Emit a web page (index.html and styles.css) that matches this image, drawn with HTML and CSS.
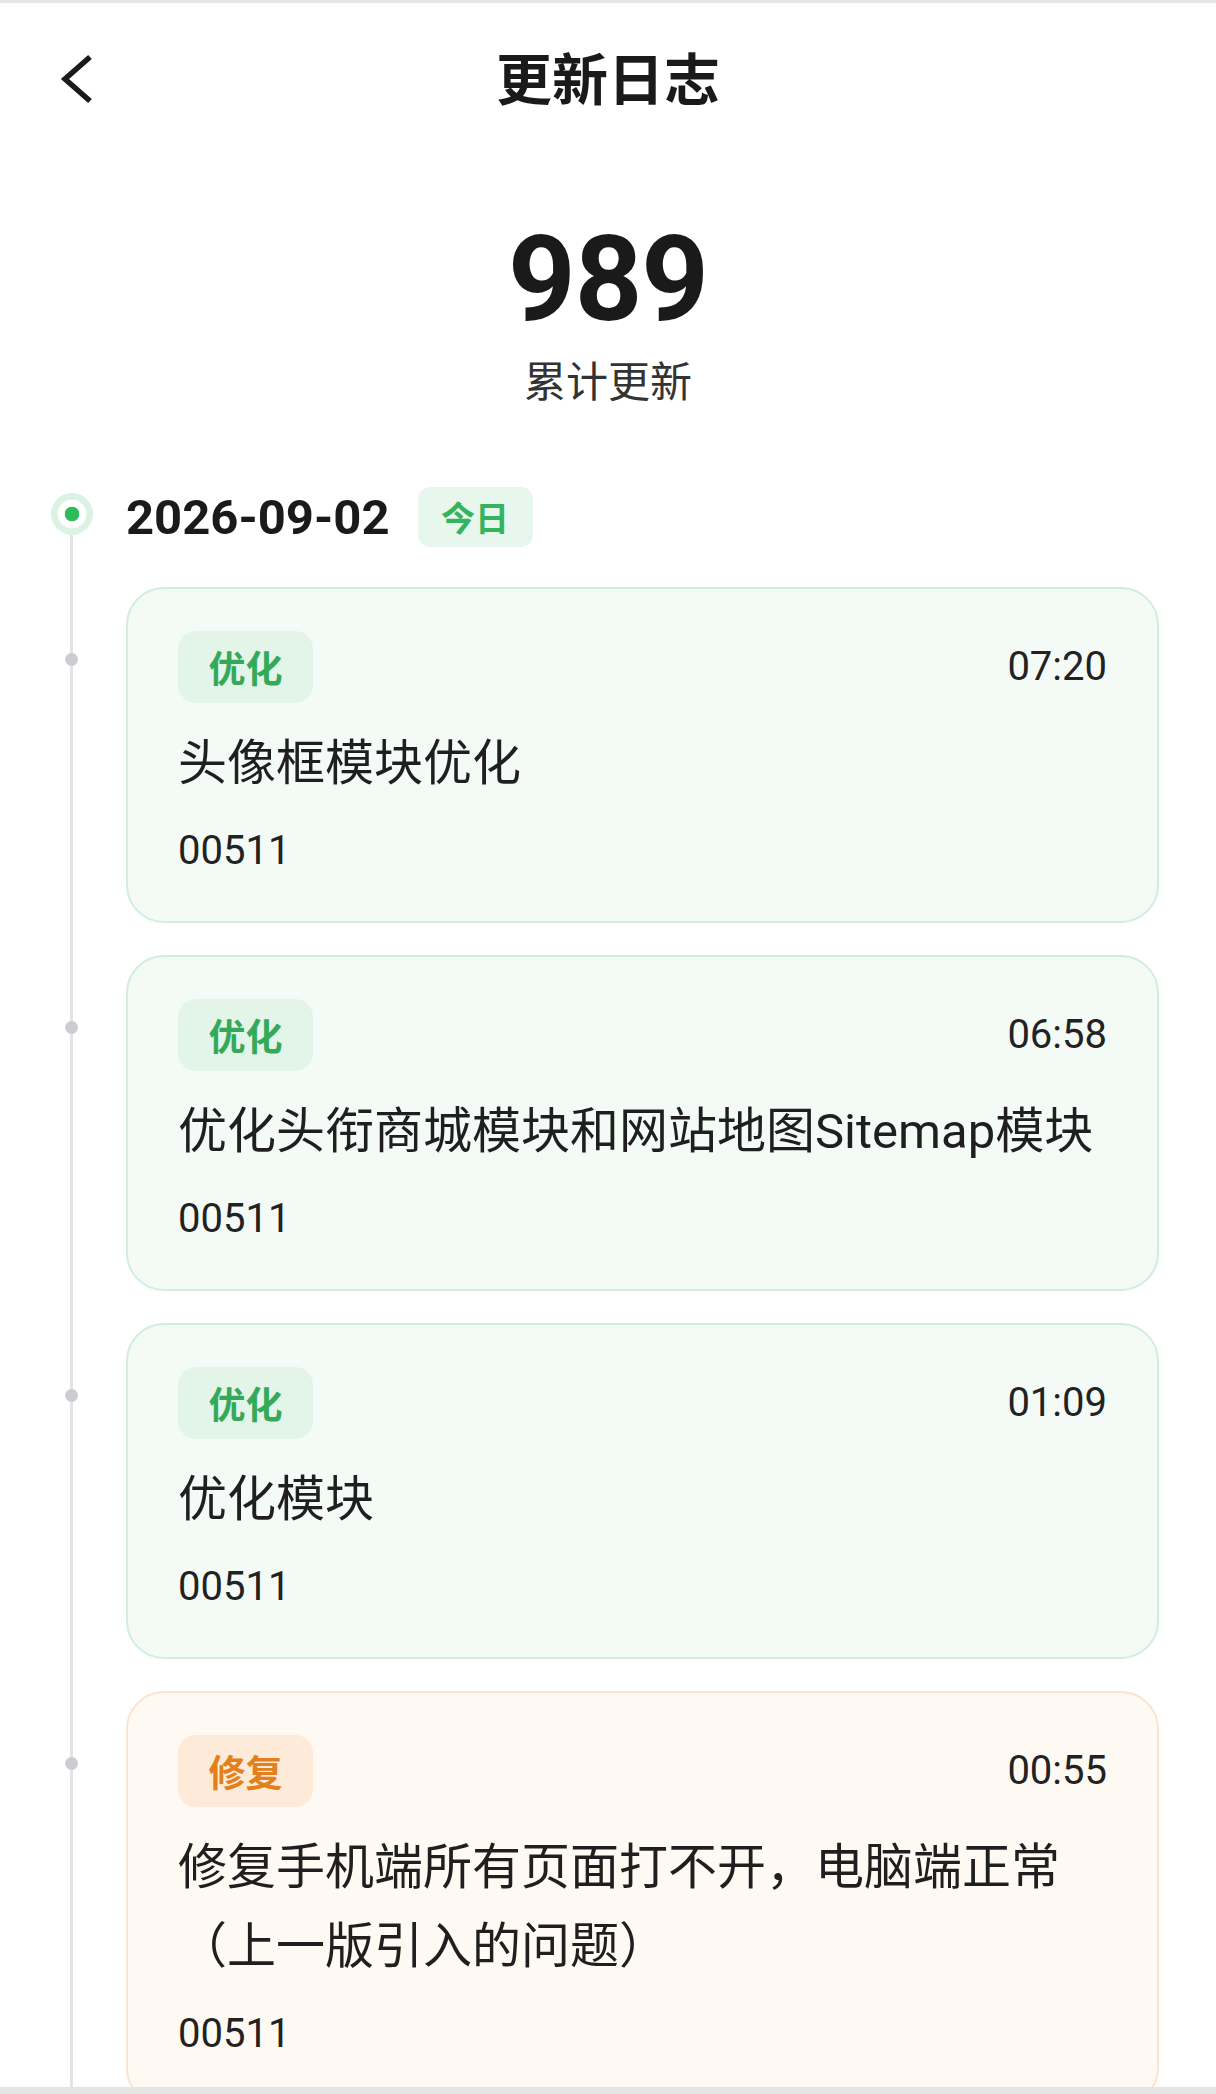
FILE: index.html
```html
<!DOCTYPE html>
<html lang="zh-CN">
<head>
<meta charset="utf-8">
<title>更新日志</title>
<link rel="stylesheet" href="styles.css">
</head>
<body>
<div class="page">
  <header class="header">
    <span class="back">
      <svg width="36" height="52" viewBox="0 0 36 52" aria-hidden="true">
        <path d="M32 4 L7 26 L32 48" fill="none" stroke="#1a1a1a" stroke-width="5.5" stroke-linejoin="miter" stroke-linecap="butt"/>
      </svg>
    </span>
    <h1 class="title">更新日志</h1>
    <span></span>
  </header>

  <section class="stats">
    <div class="total">989</div>
    <div class="total-label">累计更新</div>
  </section>

  <section class="timeline">
    <div class="day">
      <div class="rail"><span class="day-dot"></span><span class="line"></span></div>
      <div class="day-head"><span class="date">2026-09-02</span><span class="today">今日</span></div>
    </div>

    <div class="entry">
      <div class="rail"><span class="line top"></span><span class="dot"></span><span class="line"></span></div>
      <article class="card green">
        <div class="card-head"><span class="tag">优化</span><span class="time">07:20</span></div>
        <p class="card-title">头像框模块优化</p>
        <p class="card-id">00511</p>
      </article>
    </div>

    <div class="entry">
      <div class="rail"><span class="line top"></span><span class="dot"></span><span class="line"></span></div>
      <article class="card green">
        <div class="card-head"><span class="tag">优化</span><span class="time">06:58</span></div>
        <p class="card-title">优化头衔商城模块和网站地图Sitemap模块</p>
        <p class="card-id">00511</p>
      </article>
    </div>

    <div class="entry">
      <div class="rail"><span class="line top"></span><span class="dot"></span><span class="line"></span></div>
      <article class="card green">
        <div class="card-head"><span class="tag">优化</span><span class="time">01:09</span></div>
        <p class="card-title">优化模块</p>
        <p class="card-id">00511</p>
      </article>
    </div>

    <div class="entry">
      <div class="rail"><span class="line top"></span><span class="dot"></span><span class="line"></span></div>
      <article class="card orange">
        <div class="card-head"><span class="tag">修复</span><span class="time">00:55</span></div>
        <p class="card-title">修复手机端所有页面打不开，电脑端正常（上一版引入的问题）</p>
        <p class="card-id">00511</p>
      </article>
    </div>
  </section>

  <div class="home-bar"></div>
</div>
</body>
</html>
```

FILE: styles.css
```css
html, body {
  margin: 0;
  padding: 0;
}

body {
  width: 1216px;
  height: 2094px;
  overflow: hidden;
  background: #ffffff;
  color: #1a1a1a;
  font-family: Roboto, "Noto Sans CJK SC", sans-serif;
}

.page {
  border-top: 3px solid #e6e6e6;
}

/* header */
.header {
  display: grid;
  grid-template-columns: 1fr auto 1fr;
  align-items: center;
  height: 146px;
}

.back {
  justify-self: start;
  display: flex;
  margin-left: 58px;
  margin-top: 6px;
}

.title {
  margin: 0;
  font-family: "Noto Sans CJK SC", sans-serif;
  font-weight: 700;
  font-size: 56px;
  line-height: 56px;
  color: #1a1a1a;
}

/* stats */
.stats {
  text-align: center;
}

.total {
  margin-top: 72px;
  font-family: Roboto, sans-serif;
  font-weight: 700;
  font-size: 118px;
  line-height: 1;
  letter-spacing: -1px;
  color: #1a1a1a;
}

.total-label {
  margin-top: 10px;
  font-family: "Noto Sans CJK SC", sans-serif;
  font-size: 42px;
  line-height: 60px;
  color: #333333;
}

/* timeline */
.timeline {
  margin-top: 78px;
}

.day,
.entry {
  display: flex;
}

.rail {
  flex: none;
  width: 126px;
  box-sizing: border-box;
  padding-left: 17px;
  display: flex;
  flex-direction: column;
  align-items: center;
}

.line {
  flex: 1;
  width: 3px;
  background: #e4e4e4;
}

.line.top {
  flex: none;
  height: 66px;
}

.day-dot {
  flex: none;
  width: 42px;
  height: 42px;
  margin-top: 6px;
  border-radius: 50%;
  background: radial-gradient(circle, #2ebc5a 0 7px, #ffffff 7.6px 14px, #dcf2e3 14.6px);
}

.dot {
  flex: none;
  width: 13px;
  height: 13px;
  border-radius: 50%;
  background: #cdcdd1;
}

.day-head {
  display: flex;
  align-items: center;
  height: 60px;
  margin-bottom: 40px;
}

.date {
  font-family: Roboto, sans-serif;
  font-weight: 700;
  font-size: 49px;
  line-height: 1;
  color: #1a1a1a;
}

.today {
  margin-left: 28px;
  height: 60px;
  padding: 0 23.5px;
  border-radius: 12px;
  background: #e7f7ed;
  color: #34b45e;
  font-family: "Noto Sans CJK SC", sans-serif;
  font-weight: 700;
  font-size: 34px;
  line-height: 60px;
}

/* cards */
.card {
  flex: 1;
  margin: 0 57px 32px 0;
  padding: 42px 50px 45px;
  border: 2px solid;
  border-radius: 38px;
}

.card.green {
  background: #f4fbf6;
  border-color: #d1eedb;
}

.card.orange {
  background: #fff9f3;
  border-color: #fbe4cf;
}

.card-head {
  display: flex;
  justify-content: space-between;
  align-items: center;
  height: 72px;
}

.tag {
  height: 72px;
  padding: 0 30.5px;
  border-radius: 18px;
  font-family: "Noto Sans CJK SC", sans-serif;
  font-weight: 700;
  font-size: 37px;
  line-height: 72px;
}

.green .tag {
  background: #e2f5e8;
  color: #34a95a;
}

.orange .tag {
  background: #fdead8;
  color: #e4801b;
}

.time {
  font-family: Roboto, sans-serif;
  font-size: 40px;
  line-height: 1;
  color: #222222;
}

.card-title {
  margin: 21px 0 0;
  font-size: 49px;
  line-height: 79px;
  color: #1f1f1f;
}

.card-id {
  margin: 23px 0 0;
  font-family: Roboto, sans-serif;
  font-size: 40px;
  line-height: 50px;
  color: #222222;
}

.home-bar {
  position: fixed;
  left: 0;
  right: 0;
  bottom: 0;
  height: 7px;
  background: #e4e4e4;
}
```
